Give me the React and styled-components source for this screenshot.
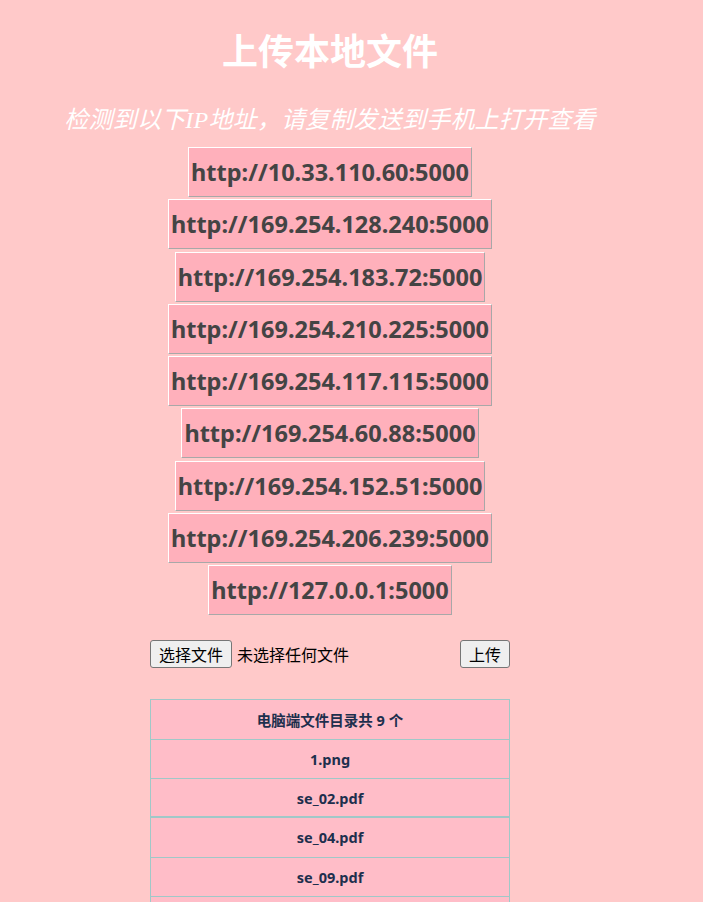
import React from "react";
import styled, { createGlobalStyle } from "styled-components";

const Global = createGlobalStyle`
  html, body { margin: 0; padding: 0; background: #ffc9c9; }
  body { font-family: "Noto Sans", "Noto Sans CJK SC", sans-serif; }
`;

const Page = styled.div`
  width: 644px;
  margin-left: 8px;
  display: flex;
  flex-direction: column;
  align-items: center;
`;

const Title = styled.h1`
  margin: 24px 0 0;
  font-family: "Noto Sans CJK SC", sans-serif;
  font-size: 36px;
  font-weight: 700;
  line-height: 50px;
  color: #ffffff;
`;

const Subtitle = styled.h2`
  margin: 30px 0 0;
  font-family: "Liberation Serif", "Noto Sans CJK SC", serif;
  font-style: italic;
  font-weight: 400;
  font-size: 24px;
  line-height: 32px;
  color: #ffffff;
  letter-spacing: 0.2px;
`;

const IpList = styled.div`
  margin-top: 11px;
  display: flex;
  flex-direction: column;
  align-items: center;
  gap: 2.3px;
`;

const IpBox = styled.div`
  height: 50px;
  box-sizing: border-box;
  display: flex;
  align-items: center;
  padding: 0 2px;
  background: #ffb0bb;
  border-top: 1px solid #ffffff;
  border-left: 1px solid #ffffff;
  border-right: 1px solid #a8a8a8;
  border-bottom: 1px solid #a8a8a8;
  font-family: "Noto Sans", sans-serif;
  font-weight: 700;
  font-size: 23.5px;
  color: #444444;
`;

const UploadForm = styled.form`
  margin-top: 25px;
  width: 360px;
  display: flex;
  justify-content: space-between;
  align-items: center;
`;

const FileField = styled.div`
  display: flex;
  align-items: center;
  gap: 5px;
  font-family: "Noto Sans CJK SC", sans-serif;
  font-size: 16px;
  color: #000;
`;

const Btn = styled.button`
  height: 28px;
  box-sizing: border-box;
  padding: 0 8px;
  font-family: "Noto Sans CJK SC", sans-serif;
  font-size: 16px;
  line-height: 1;
  color: #000;
  background: #efefef;
  border: 1px solid #767676;
  border-radius: 3px;
`;

const Table = styled.table`
  margin-top: 31px;
  width: 360px;
  border-collapse: collapse;
  background: #ffbdc8;
  font-family: "Noto Sans", "Noto Sans CJK SC", sans-serif;
  font-size: 14.5px;
  font-weight: 700;
  color: #1d2f4d;
`;

const Cell = styled.td`
  height: ${(p) => (p.$thick ? 37.3 : 38.3)}px;
  padding: 0;
  text-align: center;
  border: 1px solid #a0c8c8;
  border-bottom-width: ${(p) => (p.$thick ? 2 : 1)}px;
`;

const ips = [
  "http://10.33.110.60:5000",
  "http://169.254.128.240:5000",
  "http://169.254.183.72:5000",
  "http://169.254.210.225:5000",
  "http://169.254.117.115:5000",
  "http://169.254.60.88:5000",
  "http://169.254.152.51:5000",
  "http://169.254.206.239:5000",
  "http://127.0.0.1:5000",
];

const files = ["1.png", "se_02.pdf", "se_04.pdf", "se_09.pdf", "se_10.pdf", "se_11.pdf", "se_12.pdf", "se_13.pdf", "se_14.pdf"];

export default function App() {
  return (
    <>
      <Global />
      <Page>
        <Title>上传本地文件</Title>
        <Subtitle>检测到以下IP地址，请复制发送到手机上打开查看</Subtitle>
        <IpList>
          {ips.map((ip) => (
            <IpBox key={ip}>{ip}</IpBox>
          ))}
        </IpList>
        <UploadForm onSubmit={(e) => e.preventDefault()}>
          <FileField>
            <Btn type="button">选择文件</Btn>
            <span>未选择任何文件</span>
          </FileField>
          <Btn type="submit">上传</Btn>
        </UploadForm>
        <Table>
          <tbody>
            <tr>
              <Cell>电脑端文件目录共 9 个</Cell>
            </tr>
            {files.map((f, i) => (
              <tr key={f}>
                <Cell $thick={i === 1}>{f}</Cell>
              </tr>
            ))}
          </tbody>
        </Table>
      </Page>
    </>
  );
}
